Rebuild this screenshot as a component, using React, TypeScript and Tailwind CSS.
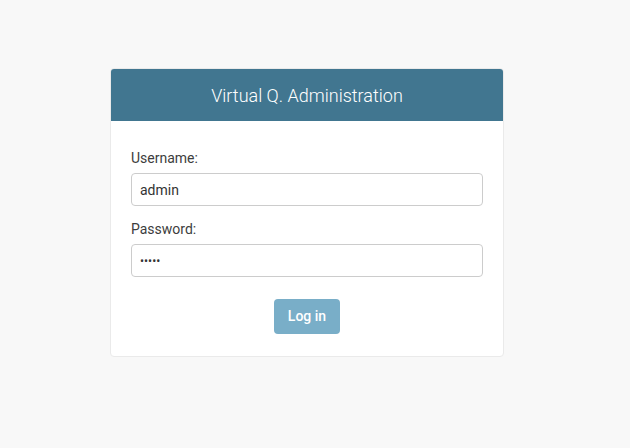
export default function App() {
  return (
    <div
      className="min-h-[448px] bg-[#f8f8f8] pt-[68px] pr-[16px]"
      style={{ fontFamily: "Roboto, 'Liberation Sans', sans-serif" }}
    >
      <div className="mx-auto w-[394px] overflow-hidden rounded-[4px] border border-[#eaeaea] bg-white">
        <div className="flex h-[52px] items-center justify-center bg-[#417690]">
          <h1 className="text-[18px] font-light text-white">Virtual Q. Administration</h1>
        </div>
        <form className="px-5 pt-[27px] pb-[22px]">
          <label className="block text-[14px] leading-5 text-[#3d3d3d]">Username:</label>
          <input
            type="text"
            defaultValue="admin"
            className="mt-[5px] block h-[33px] w-full rounded-[4px] border border-[#ccc] px-2 text-[14px] text-[#333] outline-none"
          />
          <label className="mt-[13px] block text-[14px] leading-5 text-[#3d3d3d]">Password:</label>
          <input
            type="password"
            defaultValue="admin"
            className="mt-[5px] block h-[33px] w-full rounded-[4px] border border-[#ccc] px-2 text-[12px] text-[#333] outline-none"
          />
          <div className="mt-[22px] flex justify-center">
            <button
              type="button"
              className="h-[35px] w-[66px] rounded-[4px] bg-[#79aec8] text-[14px] font-medium text-white"
            >
              Log in
            </button>
          </div>
        </form>
      </div>
    </div>
  );
}
